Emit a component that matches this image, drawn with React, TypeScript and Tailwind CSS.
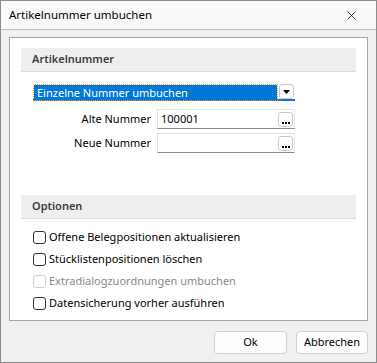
import { X } from "lucide-react";

const options = [
  { label: "Offene Belegpositionen aktualisieren", disabled: false },
  { label: "Stücklistenpositionen löschen", disabled: false },
  { label: "Extradialogzuordnungen umbuchen", disabled: true },
  { label: "Datensicherung vorher ausführen", disabled: false },
];

function SectionHeader({ title }: { title: string }) {
  return (
    <div className="mx-[11px] h-[24px] bg-[#eeeeee] border-b border-[#dcdcdc] flex items-center pl-[11px] text-[11px] font-semibold text-[#3c3c3c]">
      {title}
    </div>
  );
}

function DotsButton() {
  return (
    <div className="absolute right-[1px] top-[2px] w-[15px] h-[15px] rounded-[3px] border border-[#c8c8c8] bg-white flex items-end justify-center pb-[2px]">
      <span className="flex gap-[1px]">
        <span className="w-[2px] h-[2px] bg-black" />
        <span className="w-[2px] h-[2px] bg-black" />
        <span className="w-[2px] h-[2px] bg-black" />
      </span>
    </div>
  );
}

function Field({ label, value }: { label: string; value: string }) {
  return (
    <div className="flex items-center h-[20px]">
      <div className="w-[124px] text-right pr-[6px] text-[11px] text-black">{label}</div>
      <div className="relative w-[138px] h-[20px] border border-[#e3e3e3] border-b-[#8a8a8a] bg-white text-[11px] pl-[3px] leading-[18px]">
        {value}
        <DotsButton />
      </div>
    </div>
  );
}

export default function App() {
  return (
    <div
      className="w-[377px] h-[363px] border border-[#8c8c8c] bg-[#f0f0f0] flex flex-col"
      style={{ fontFamily: '"Noto Sans", "Open Sans", sans-serif' }}
    >
      {/* Title bar */}
      <div className="h-[29px] bg-[#f9f9f9] border-b border-[#bdbdbd] flex items-center justify-between pl-[8px] pr-[17px]">
        <span className="text-[11.5px] text-black">Artikelnummer umbuchen</span>
        <X size={15} strokeWidth={1.2} className="text-black" />
      </div>

      {/* Content panel */}
      <div className="mx-[8px] mt-[7px] h-[284px] border border-[#a6a6a6] bg-white pt-[10px]">
        <SectionHeader title="Artikelnummer" />

        <div className="pl-[23px] pt-[11px]">
          {/* Combobox */}
          <div className="relative w-[262px] h-[18px] border-b-2 border-[#0a74d6] bg-white">
            <div className="absolute left-[1px] top-[2px] w-[243px] h-[15px] bg-[#0078d7] outline-1 outline-dotted outline-[#ff9900] text-white text-[11px] leading-[15px] pl-[3px]">
              Einzelne Nummer umbuchen
            </div>
            <div className="absolute right-[1px] top-[1px] w-[15px] h-[15px] rounded-[3px] border border-[#c8c8c8] bg-white flex items-center justify-center">
              <svg width="7" height="4" viewBox="0 0 7 4">
                <path d="M0 0h7L3.5 4z" fill="#000" />
              </svg>
            </div>
          </div>

          <div className="mt-[8px] flex flex-col gap-[4px]">
            <Field label="Alte Nummer" value="100001" />
            <Field label="Neue Nummer" value="" />
          </div>
        </div>

        <div className="mt-[42px]">
          <SectionHeader title="Optionen" />
        </div>

        <div className="pl-[23px] pt-[7px] flex flex-col">
          {options.map((o) => (
            <div key={o.label} className="h-[22px] flex items-center gap-[3px]">
              <span
                className={
                  o.disabled
                    ? "w-[13px] h-[13px] rounded-[3px] border border-[#cfcfcf] bg-white"
                    : "w-[13px] h-[13px] rounded-[3px] border border-[#333333] bg-white"
                }
              />
              <span className={o.disabled ? "text-[11px] text-[#8a8a8a]" : "text-[11px] text-black"}>
                {o.label}
              </span>
            </div>
          ))}
        </div>
      </div>

      {/* Buttons */}
      <div className="mt-[10px] mr-[8px] flex justify-end gap-[9px]">
        <button className="w-[73px] h-[23px] rounded-[4px] border border-[#d0d0d0] bg-[#fdfdfd] text-[11px] text-black">
          Ok
        </button>
        <button className="w-[72px] h-[23px] rounded-[4px] border border-[#d0d0d0] bg-[#fdfdfd] text-[11px] text-black">
          Abbrechen
        </button>
      </div>
    </div>
  );
}
